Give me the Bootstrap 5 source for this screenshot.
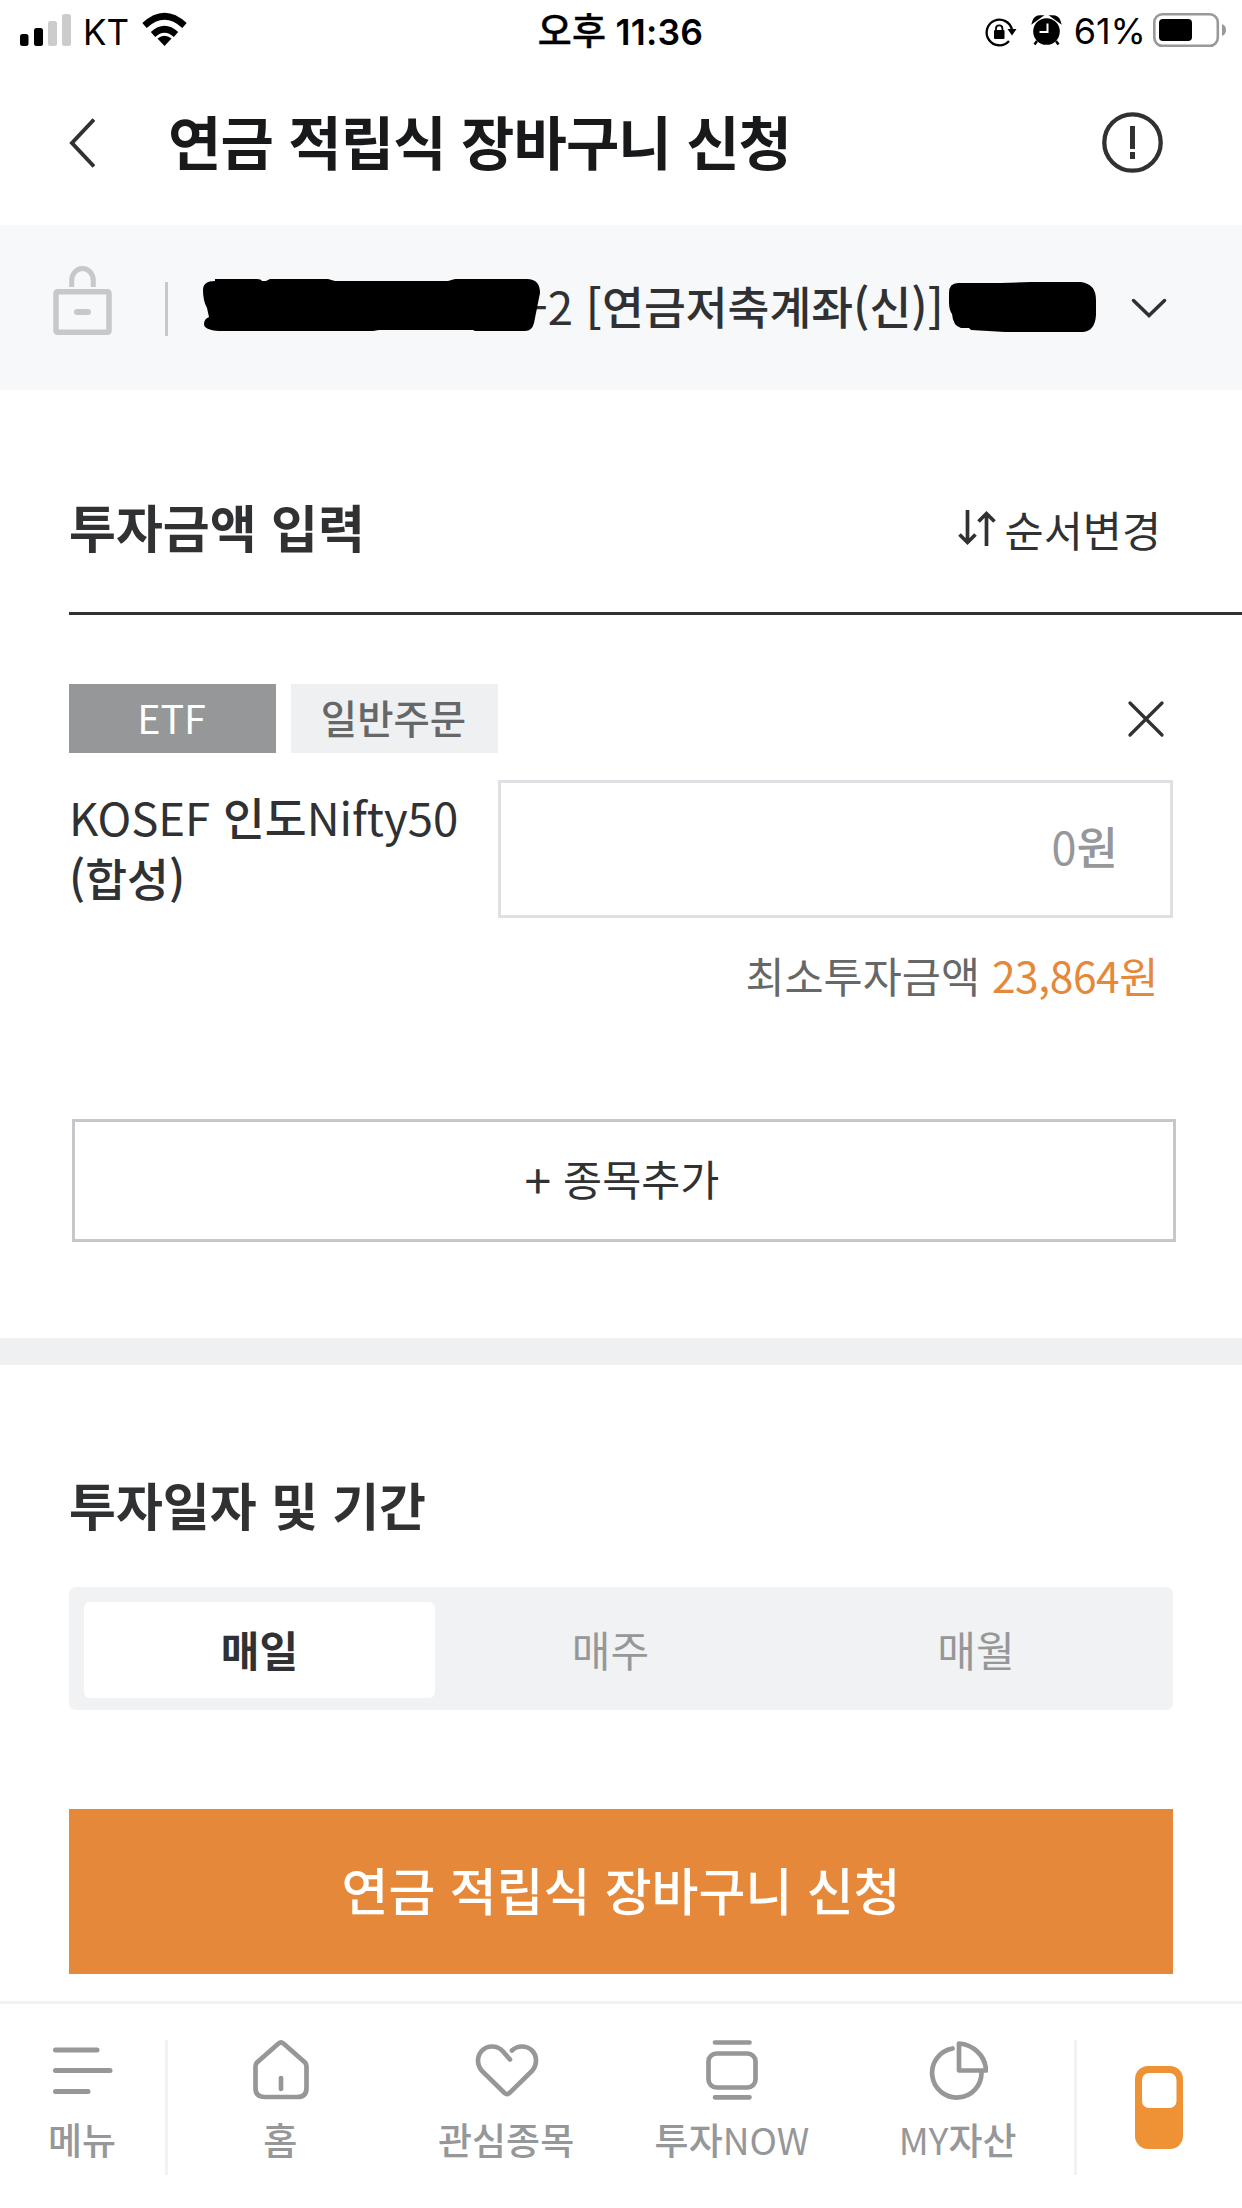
<!DOCTYPE html>
<html lang="ko">
<head>
<meta charset="utf-8">
<meta name="viewport" content="width=device-width, initial-scale=1">
<title>연금 적립식 장바구니 신청</title>
<link href="https://cdn.jsdelivr.net/npm/bootstrap@5.3.0/dist/css/bootstrap.min.css" rel="stylesheet">
<style>
  body { width: 1242px; height: 2208px; overflow: hidden; background: #fff; color: #303133; font-family: "Noto Sans CJK KR", sans-serif; line-height: 1.2; }
  svg { display: block; flex: none; }
  .latin { font-weight: 400; }
  .statusbar { height: 60px; padding: 0 15px 0 20px; color: #000; font-family: Inter, "Noto Sans CJK KR", sans-serif; font-size: 35px; }
  .statusbar > div { flex: 1 1 0; }
  .carrier { margin: 3px 0 0 11px; }
  .percent { margin: 3px 6px 0 11px; font-size: 36px; }
  .clock { font-weight: 600; font-size: 35.5px; letter-spacing: .2px; padding-right: 6px; }
  .clock span { font-weight: 500; font-size: 37px; -webkit-text-stroke: .4px #000; }
  .appbar { height: 165px; padding: 0 79px 0 69px; }
  .appbar h1 { font-size: 58px; font-weight: 700; color: #18191b; margin: -4px 0 0 73px; letter-spacing: -.9px; }
  .account { height: 165px; background: #f7f8fa; padding-left: 53px; font-size: 45.5px; font-weight: 500; }
  .acct-name { margin: -4px 0 0 -9px; white-space: pre; }
  .vline { width: 3px; height: 54px; background: #c7c8cb; margin: 2px 35px 0 53px; }
  .heading { font-size: 51px; font-weight: 700; margin: 0; padding-top: 1px; }
  .amount-head { height: 225px; margin-left: 69px; padding: 50px 81px 0 0; border-bottom: 3px solid #303133; }
  .sort { font-size: 42.5px; padding-top: 4px; }
  .inner { padding: 0 69px; }
  .tagbox { width: 207px; height: 69px; font-size: 39.5px; padding: 0 2px 4px 0; }
  .tag-etf { background: #969798; color: #fff; }
  .tag-order { background: #eff0f2; color: #666768; font-weight: 500; }
  .fund { width: 429px; font-size: 45.5px; font-weight: 500; line-height: 61px; padding-top: 6px; white-space: nowrap; }
  .amount { height: 138px; border: 3px solid #e0e0e4; color: #969798; font-size: 45px; font-weight: 500; padding: 0 52px 6px 0; }
  .hint { font-size: 42.5px; color: #666768; line-height: 60px; margin-top: 27px; padding-right: 15px; }
  .hint span { color: #e5883a; letter-spacing: -.4px; }
  .addbtn { width: 1104px; height: 123px; margin: 114px 0 0 3px; border: 3px solid #c7c7cb; border-radius: 0; font-size: 42.5px; color: #303133; padding: 0 4px 5px 0; }
  .addbtn span { font-size: 48px; line-height: 1; }
  .band { height: 27px; background: #eff0f2; margin-top: 96px; }
  .segment { height: 123px; background: #f1f2f4; border-radius: 7px; padding: 15px 15px 12px; color: #969799; font-size: 42px; }
  .segment > div { width: 351px; padding-bottom: 2px; }
  .segment .on { background: #fff; border-radius: 6px; color: #303133; font-weight: 700; }
  .submit { height: 165px; margin-top: 99px; background: #e5883a; color: #fff; border: 0; border-radius: 0; font-size: 51px; font-weight: 500; padding: 0 0 4px; }
  .tabbar { height: 207px; margin-top: 27px; border-top: 3px solid #f2f2f3; color: #969799; font-size: 37px; font-weight: 500; }
  .tabbar .cell { width: 225.75px; padding-top: 36px; white-space: nowrap; }
  .tabbar .cell > span { line-height: 44px; margin: 17px 1px 0 0; }
  .tabbar .rule { width: 3px; height: 135px; background: #f2f2f3; margin-top: 36px; }
</style>
</head>
<body>
<div class="statusbar d-flex align-items-center">
  <div class="d-flex align-items-center">
    <svg width="52" height="60" viewBox="20 0 52 60"><rect x="20" y="34" width="8.5" height="12" rx="2.5"/><rect x="34" y="28" width="9" height="18" rx="2.5"/><rect x="48" y="21" width="9" height="25" rx="2.5" fill="#ccc"/><rect x="62" y="14" width="9" height="32" rx="2.5" fill="#ccc"/></svg>
    <span class="carrier">KT</span>
    <svg style="margin-left:13px" width="46" height="60" viewBox="142 0 46 60"><path d="M164.500 46 L157.500 38.500 Q164.500 33 171.500 38.500Z"/><path d="M153 34.500 Q164.500 24 176 34.500" fill="none" stroke="#000" stroke-width="6.500"/><path d="M144.500 25.500 Q164.500 7 184.500 25.500" fill="none" stroke="#000" stroke-width="6.500"/></svg>
  </div>
  <div class="clock text-center pt-1"><span>오후</span> 11:36</div>
  <div class="d-flex justify-content-end align-items-center">
    <svg width="80" height="60" viewBox="983 0 80 60"><path d="M1009 41 A12.800 12.800 0 1 1 1012 30" fill="none" stroke="#000" stroke-width="2.300"/><path d="M1007.500 29h9l-4.500 6.500z"/><rect x="994" y="30" width="10.500" height="9" rx="1"/><path d="M996 31v-2.500a3.200 3.200 0 0 1 6.400 0V31" fill="none" stroke="#000" stroke-width="1.800"/><circle cx="1046.500" cy="31.500" r="13.300"/><path d="M1033.500 21.500q1.500-5 7-5zM1059.500 21.500q-1.500-5-7-5zM1037 41l-2.500 3.500M1056 41l2.500 3.500" stroke="#000" stroke-width="2.500"/><path d="M1047.500 23.500v8.500h-8" stroke="#fff" stroke-width="2" fill="none"/></svg>
    <span class="percent">61%</span>
    <svg width="75" height="60" viewBox="1152 0 75 60"><rect x="1154.300" y="14.300" width="63.500" height="31.500" rx="8" fill="none" stroke="#999" stroke-width="2.600"/><rect x="1159" y="19" width="33" height="22" rx="4"/><path d="M1222 24q4 1.500 4 6t-4 6z" fill="#999"/></svg>
  </div>
</div>

<header class="appbar d-flex align-items-center">
  <svg width="26" height="50" viewBox="0 0 26 50" fill="none" stroke="#303133" stroke-width="4"><path d="M25 1.500 3 25 25 48.500"/></svg>
  <h1>연금 적립식 장바구니 신청</h1>
  <svg class="ms-auto" width="61" height="61" viewBox="0 0 61 61"><circle cx="30.500" cy="30.500" r="28.200" fill="none" stroke="#303133" stroke-width="4.300"/><path d="M30.500 14v23M30.500 40v7" stroke="#303133" stroke-width="5"/></svg>
</header>

<div class="account d-flex align-items-center">
  <svg width="59" height="165" viewBox="53 225 59 165" fill="none" stroke="#c7c8cb"><rect x="56" y="291.700" width="53" height="40.600" rx="1.500" stroke-width="5.500"/><path d="M71.700 287v-6.500a10.800 12 0 0 1 21.600 0V287" stroke-width="5"/><path d="M77 312h11" stroke-width="6" stroke-linecap="round"/></svg>
  <div class="vline"></div>
  <svg class="position-relative z-1" width="338" height="165" viewBox="204 225 338 165"><path d="M216 279h42q4 0 5 2h4l4-2h58l7 2h113l7-2h72q13 0 13 14l-4 20-2 10q-2 8-9 8h-50l-2-1h-94l-6 1-90 0-64 0q-15-1-15-7 0-5 5-7l-2-9q-4-7-4-18 0-9 12-9z"/></svg>
  <span class="acct-name"><span class="latin">-2</span> [연금저축계좌(신)]</span>
  <svg style="margin-left:5px" width="147" height="165" viewBox="948 225 147 165"><path d="M957 283h43l30-1h50q15 2 15 18v15q-1 16-13 17h-78l-34-2-2-2h-8q-8-2-9-14-3-4-3-12v-9q0-10 9-10z"/></svg>
  <svg style="margin-left:35px" width="36" height="165" viewBox="1131 225 36 165" fill="none" stroke="#303133" stroke-width="3.500" stroke-linecap="round"><path d="M1133.500 300.500 1149 315.500 1164.500 300.500"/></svg>
</div>

<main>
  <div class="amount-head d-flex align-items-center justify-content-between">
    <h2 class="heading">투자금액 입력</h2>
    <div class="sort d-flex align-items-center">
      <svg class="me-2" width="39" height="36" viewBox="0 0 39 36" fill="none" stroke="#303133" stroke-width="3.700"><path d="M9.500 0v33M1.500 24.500l8 8 8-8M28.500 36V3M20.500 11.500l8-8 8 8"/></svg>순서변경
    </div>
  </div>

  <section class="inner">
    <div class="d-flex align-items-center" style="padding-top:69px">
      <div class="tagbox tag-etf d-flex align-items-center justify-content-center">ETF</div>
      <div class="tagbox tag-order d-flex align-items-center justify-content-center" style="margin-left:15px">일반주문</div>
      <svg class="ms-auto me-2" width="38" height="38" viewBox="0 0 38 38" stroke="#303133" stroke-width="3.300" stroke-linecap="round"><path d="M3 3l32 32M35 3L3 35"/></svg>
    </div>
    <div class="d-flex" style="margin-top:27px">
      <div class="fund"><span class="latin">KOSEF</span> 인도<span class="latin">Nifty50</span><br>(합성)</div>
      <div class="amount flex-fill d-flex align-items-center justify-content-end"><span class="latin">0</span>원</div>
    </div>
    <div class="hint text-end">최소투자금액 <span>23,864원</span></div>
    <button class="addbtn btn d-flex align-items-center justify-content-center"><span>+</span>&nbsp;종목추가</button>
  </section>
  <div class="band"></div>

  <section class="inner">
    <h2 class="heading" style="line-height:61px;padding:109px 0 52px">투자일자 및 기간</h2>
    <div class="segment d-flex">
      <div class="on d-flex align-items-center justify-content-center">매일</div>
      <div class="d-flex align-items-center justify-content-center">매주</div>
      <div class="flex-fill d-flex align-items-center justify-content-center ps-2">매월</div>
    </div>
    <button class="submit btn w-100">연금 적립식 장바구니 신청</button>
  </section>
</main>

<nav class="tabbar d-flex">
  <div class="cell d-flex flex-column align-items-center" style="width:165px">
    <svg width="60" height="60" viewBox="53 2040 60 60" stroke="#969799" stroke-width="5" stroke-linecap="round"><path d="M55.500 2050H97M55.500 2070.500H110M55.500 2091.500H88"/></svg>
    <span>메뉴</span>
  </div>
  <div class="rule"></div>
  <div class="cell d-flex flex-column align-items-center">
    <svg width="60" height="60" viewBox="251 2040 60 60" fill="none" stroke="#969799" stroke-width="4.700" stroke-linecap="round"><path d="M278.500 2043.500q2.500-2 5 0l21.500 19q1.500 1.500 1.500 4V2088q0 9-9 9h-33q-9 0-9-9v-21.500q0-2.500 1.500-4zM281 2078v11"/></svg>
    <span>홈</span>
  </div>
  <div class="cell d-flex flex-column align-items-center">
    <svg width="66" height="60" viewBox="473.500 2040 66 60" fill="none" stroke="#969799" stroke-width="4.700" stroke-linecap="round"><path d="M509.500 2059.500l-7-8c-3-3.500-6.500-5-11-5-8 0-14 6.200-14 14 0 4 1.500 7.500 4 10.500l22.500 22q2.500 2 5 0l22.500-22c2.500-3 4-6.500 4-10.500 0-8-6-14-14-14-4 0-7.500 1.500-10 4"/></svg>
    <span>관심종목</span>
  </div>
  <div class="cell d-flex flex-column align-items-center">
    <svg width="60" height="60" viewBox="702 2040 60 60" fill="none" stroke="#969799" stroke-width="4.700" stroke-linecap="round"><path d="M715 2042.500h34.500M715 2097.300h34.500"/><rect x="708.500" y="2053.500" width="47" height="34" rx="8"/></svg>
    <span>투자<span class="latin">NOW</span></span>
  </div>
  <div class="cell d-flex flex-column align-items-center">
    <svg width="60" height="60" viewBox="927.500 2040 60 60" fill="none" stroke="#969799" stroke-width="4.700" stroke-linecap="round" stroke-linejoin="round"><path d="M958.500 2043.500c14 1 26.500 12 27 27h-27z"/><path d="M952 2048.500a24.700 24.700 0 1 0 29 24"/></svg>
    <span><span class="latin">MY</span>자산</span>
  </div>
  <div class="rule" style="margin-left:3px"></div>
  <div class="flex-fill d-flex justify-content-center pe-1">
    <svg width="48" height="84" viewBox="0 0 48 84" style="margin:62px 0 0 2px"><rect width="48" height="83" rx="13" fill="#ee9235"/><rect x="7" y="7" width="34.500" height="35" rx="7" fill="#fff"/></svg>
  </div>
</nav>
<script src="https://cdn.jsdelivr.net/npm/bootstrap@5.3.0/dist/js/bootstrap.bundle.min.js"></script>
</body>
</html>
